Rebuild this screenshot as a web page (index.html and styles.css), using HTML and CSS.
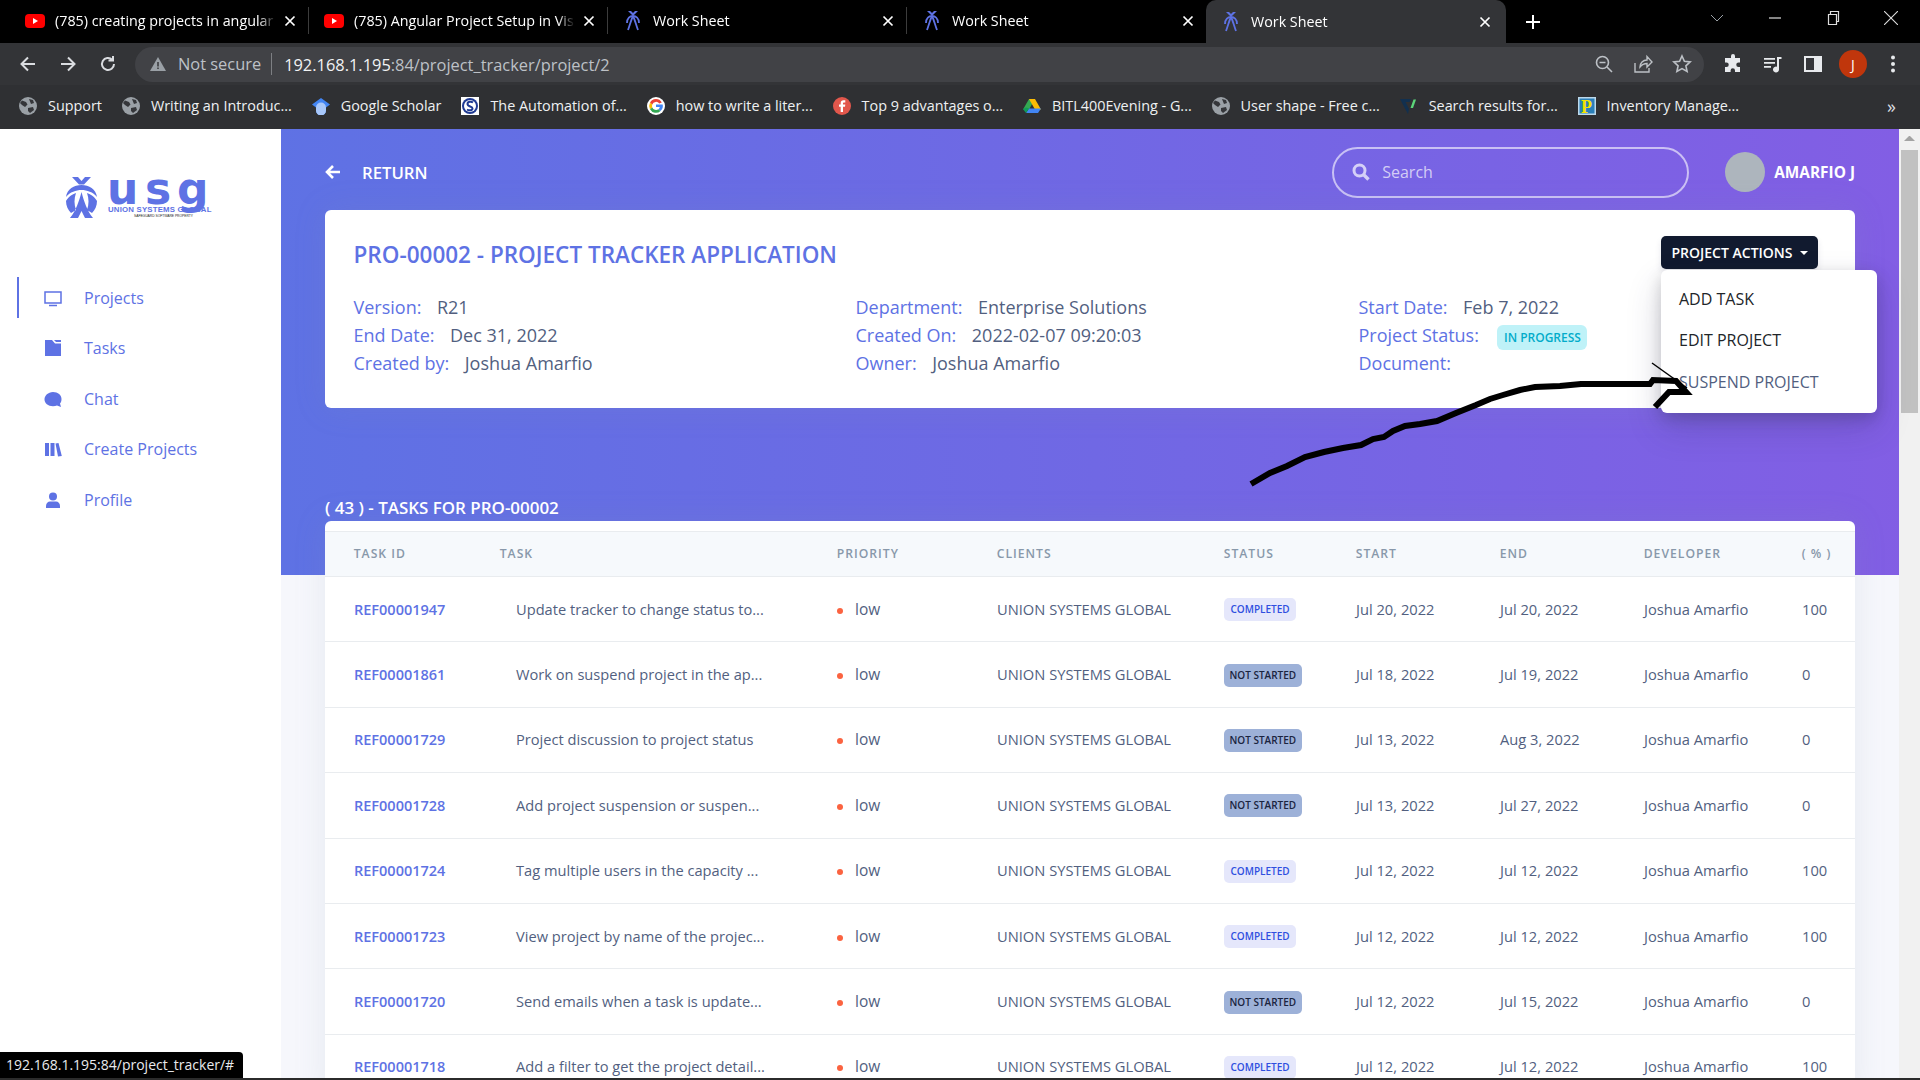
FILE: index.html
```html
<!DOCTYPE html>
<html>
  <head>
    <meta charset="utf-8">
    <title>Work Sheet</title>
    <link rel="stylesheet" href="styles.css">
  </head>
  <body>
    <svg class="defs" width="0" height="0">
      <symbol id="yt" viewBox="0 0 20 14"><rect width="20" height="14" rx="4" fill="#f00"/><path d="M8 4l5 3-5 3z" fill="#fff"/></symbol>
      <symbol id="usgfav" viewBox="0 0 16 20"><g fill="none" stroke="#5e72e4" stroke-width="1.8"><path d="M2 12c0-5 3-7 6-7s6 2 6 7"/><path d="M8 5c-2 4-3 9-5 14M8 5c2 4 3 9 5 14"/></g><path d="M3 0h3l2 2 2-2h3L9 4H7z" fill="#5e72e4"/></symbol>
      <symbol id="globe" viewBox="0 0 18 18"><circle cx="9" cy="9" r="9" fill="#9aa0a6"/><path d="M3 3.500l4 1.500 1.500 2.500L6 10 3 8 1 6zM10 2l4 1 1 3-3 1zM9 11l5-1 1 3-4 3-2-2z" fill="#35363a"/></symbol>
      <symbol id="close" viewBox="0 0 12 12"><path d="M1.500 1.500l9 9M10.500 1.500l-9 9" stroke="#fff" stroke-width="1.700"/></symbol>
    </svg>

    <div class="browser">
      <div class="tabstrip">
        <div class="tab"><svg class="fav"><use href="#yt"/></svg><span class="tab-title">(785) creating projects in angular</span><svg class="tab-x"><use href="#close"/></svg></div>
        <div class="tab"><svg class="fav"><use href="#yt"/></svg><span class="tab-title">(785) Angular Project Setup in Vis</span><svg class="tab-x"><use href="#close"/></svg></div>
        <div class="tab"><svg class="fav"><use href="#usgfav"/></svg><span class="tab-title">Work Sheet</span><svg class="tab-x"><use href="#close"/></svg></div>
        <div class="tab no-sep"><svg class="fav"><use href="#usgfav"/></svg><span class="tab-title">Work Sheet</span><svg class="tab-x"><use href="#close"/></svg></div>
        <div class="tab active"><svg class="fav"><use href="#usgfav"/></svg><span class="tab-title">Work Sheet</span><svg class="tab-x"><use href="#close"/></svg></div>
        <svg class="new-tab" viewBox="0 0 16 16"><path d="M8 1v14M1 8h14" stroke="#fff" stroke-width="2"/></svg>
        <div class="win-controls">
          <svg viewBox="0 0 14 14"><path d="M1 4l6 6 6-6" fill="none" stroke="#9aa0a6"/></svg>
          <svg viewBox="0 0 14 14"><path d="M1 7h12" stroke="#ddd" stroke-width="1.200"/></svg>
          <svg viewBox="0 0 14 14"><path d="M2.500 3.500h8v10h-8zM4.500 3.500v-3h8v10h-2" fill="none" stroke="#ddd" stroke-width="1.200"/></svg>
          <svg viewBox="0 0 14 14"><path d="M0 0l14 14M14 0L0 14" stroke="#ddd" stroke-width="1.100"/></svg>
        </div>
      </div>

      <div class="toolbar">
        <svg class="tool" viewBox="0 0 20 20"><path d="M17 10H4M10 3.500L3.500 10l6.500 6.500" fill="none" stroke="#dadce0" stroke-width="2"/></svg>
        <svg class="tool" viewBox="0 0 20 20"><path d="M3 10h13M10 3.500l6.500 6.500-6.500 6.500" fill="none" stroke="#dadce0" stroke-width="2"/></svg>
        <svg class="tool" viewBox="0 0 20 20"><path d="M16 10a6 6 0 1 1-1.800-4.300M15 2v4.500h-4.500" fill="none" stroke="#dadce0" stroke-width="2"/></svg>
        <div class="omnibox">
          <svg class="warn" viewBox="0 0 16 14"><path d="M8 0l8 14H0z" fill="#9aa0a6"/><path d="M7.200 5h1.600v4.500H7.200zM7.200 10.500h1.600V12H7.200z" fill="#3c3d40"/></svg>
          <span class="not-secure">Not secure</span>
          <span class="url"><b>192.168.1.195</b>:84/project_tracker/project/2</span>
          <div class="omni-icons">
            <svg viewBox="0 0 20 20"><circle cx="8.500" cy="8.500" r="6" fill="none" stroke="#bdc1c6" stroke-width="1.600"/><path d="M5.500 8.500h6M13 13l5 5" stroke="#bdc1c6" stroke-width="1.600"/></svg>
            <svg viewBox="0 0 20 20"><path d="M2 9v9h14v-4M7 13c0-4 3-7 7-7V2.500L19 8l-5 5V9.500c-3 0-5 1-7 3.500z" fill="none" stroke="#bdc1c6" stroke-width="1.400"/></svg>
            <svg viewBox="0 0 20 20"><path d="M10 2l2.400 5.300 5.800.6-4.300 3.900 1.200 5.700-5.100-2.900-5.100 2.900 1.200-5.700L1.800 7.900l5.800-.6z" fill="none" stroke="#bdc1c6" stroke-width="1.600"/></svg>
          </div>
        </div>
        <div class="ext-icons">
          <svg viewBox="0 0 20 20"><path d="M8 2a2 2 0 0 1 4 0v2h5v4.500h-1.500a2.200 2.200 0 0 0 0 4.500H17v5h-5v-1.500a2.200 2.200 0 0 0-4.400 0V18H2v-5h1.500a2.200 2.200 0 0 0 0-4.500H2V4h6z" fill="#e8eaed"/></svg>
          <svg viewBox="0 0 20 20"><path d="M1 4h11v1.800H1zM1 8h11v1.800H1zM1 12h7v1.800H1zM14 3h4.500v2H16v10.500a3 3 0 1 1-2-2.800z" fill="#e8eaed"/></svg>
          <svg viewBox="0 0 20 20"><path d="M1 2h18v16H1z" fill="#e8eaed"/><path d="M3 4h8v12H3z" fill="#35363a"/></svg>
          <span class="me">J</span>
          <svg viewBox="0 0 20 20"><circle cx="10" cy="3.500" r="2" fill="#e8eaed"/><circle cx="10" cy="10" r="2" fill="#e8eaed"/><circle cx="10" cy="16.500" r="2" fill="#e8eaed"/></svg>
        </div>
      </div>

      <div class="bookmarks">
        <a class="bm"><svg><use href="#globe"/></svg>Support</a>
        <a class="bm"><svg><use href="#globe"/></svg>Writing an Introduc...</a>
        <a class="bm"><svg viewBox="0 0 18 18"><path d="M9 1l9 6.500-4 3v3a5 5 0 0 1-10 0v-3l-4-3z" fill="#4285f4"/><path d="M4 10.500a5 5 0 0 1 10 0v3a5 5 0 0 1-10 0z" fill="#a8c7fa"/></svg>Google Scholar</a>
        <a class="bm"><svg viewBox="0 0 18 18"><rect width="18" height="18" fill="#fff"/><circle cx="9" cy="9" r="8" fill="#1f3a93"/><circle cx="9" cy="9" r="6" fill="#fff"/><path d="M12 5.500C10 4 6.500 4.500 6.500 7c0 3 5 2 5 4.500 0 2-3.500 2.300-5.500 1" fill="none" stroke="#1f3a93" stroke-width="2"/></svg>The Automation of...</a>
        <a class="bm"><svg viewBox="0 0 18 18"><circle cx="9" cy="9" r="9" fill="#fff"/><path d="M14.800 5.500A6.700 6.700 0 0 0 3 5.800l2.300 1.700a4 4 0 0 1 7-1z" fill="#ea4335"/><path d="M3 5.800a6.700 6.700 0 0 0 0 6.400l2.300-1.700a4 4 0 0 1 0-3z" fill="#fbbc05"/><path d="M3 12.200a6.700 6.700 0 0 0 10.500 1.700l-2.100-1.700A4 4 0 0 1 5.300 10.500z" fill="#34a853"/><path d="M13.500 13.900a6.500 6.500 0 0 0 2.200-6.400H9v2.500h3.800a3.400 3.400 0 0 1-1.400 2.200z" fill="#4285f4"/></svg>how to write a liter...</a>
        <a class="bm"><svg viewBox="0 0 18 18"><circle cx="9" cy="9" r="9" fill="#e2574c"/><path d="M10 15V9.800h2l.3-2.200H10V6.400c0-.7.300-1 1-1h1.300V3.300h-1.800C8.700 3.300 7.700 4.400 7.700 6v1.600H6v2.200h1.700V15z" fill="#fff"/></svg>Top 9 advantages o...</a>
        <a class="bm"><svg viewBox="0 0 18 18"><path d="M6 2h6l-6 10.500H0z" fill="#34a853"/><path d="M6 2h6l6 10.500h-6z" fill="#fbbc05"/><path d="M3 16l3-4.500h12l-3 4.500z" fill="#4285f4"/><path d="M0 12l3 4 3-4.500-3-1z" fill="#0f9d58"/></svg>BITL400Evening - G...</a>
        <a class="bm"><svg><use href="#globe"/></svg>User shape - Free c...</a>
        <a class="bm"><svg viewBox="0 0 18 18"><path d="M0 2h11l-1.500 3H5.500L9 12l-1 5z" fill="#12304f"/><path d="M10.500 11l3-8.500h2.500L13 11z" fill="#5cd67a"/></svg>Search results for...</a>
        <a class="bm"><svg viewBox="0 0 18 18"><rect width="18" height="18" fill="#bcd9ec"/><rect x="1.500" y="1.500" width="15" height="15" fill="#2a7fb8"/><text class="p-mark" x="3" y="16">P</text></svg>Inventory Manage...</a>
        <span class="bm-more">»</span>
      </div>

      <div class="page">
        <aside class="sidebar">
          <svg class="logo" viewBox="0 0 141 42">
            <path class="ink" d="M7 0h6l3.500 4L20 0h6l-7 7.500h-5zM1 20C2 12 9 8 16.500 8S31 12 32 20c-4-5-10-7-15.500-7S5 15 1 20zM1 24c3-5 7-7 10-8-2 6-2 11 0 17l-5 3c-3-3-5-7-5-12zM32 24c-3-5-7-7-10-8 2 6 2 11 0 17l5 3c3-3 5-7 5-12zM16.500 15c-2.500 9-5.500 19-11.500 26h8l3.500-7 3.500 7h8c-6-7-9-17-11.500-26z"/>
            <text class="usg" x="42" y="26.500">u</text>
            <text class="usg" x="80" y="26.500">s</text>
            <text class="usg" x="112" y="26.500">g</text>
            <text class="usg-name" x="43" y="35">UNION SYSTEMS GLOBAL</text>
            <text class="usg-tag" x="69" y="39.500">SAFEGUARD SOFTWARE PROPERTY</text>
          </svg>
          <nav class="nav">
            <a class="nav-item current"><svg viewBox="0 0 18 18"><path d="M1 3h16v11H1zM5 16.500h8" fill="none" stroke="currentColor" stroke-width="1.500"/></svg>Projects</a>
            <a class="nav-item"><svg viewBox="0 0 18 18"><path d="M1 1h7l3 3.500h6V17H1zM10 1h7v2h-5z" fill="currentColor"/></svg>Tasks</a>
            <a class="nav-item"><svg viewBox="0 0 18 18"><path d="M9 2c5 0 8.500 3 8.500 7 0 2-.6 3.500-1.500 4.500l1 3.500-4-1.500c-1.200.5-2.500.7-4 .7-5 0-8.500-3-8.500-6.700S4 2 9 2z" fill="currentColor"/></svg>Chat</a>
            <a class="nav-item"><svg viewBox="0 0 18 18"><path d="M1 3h4v13H1zM6.500 3h4v13h-4zM11.500 3.500l3-.5 3.300 13-3.800.5z" fill="currentColor"/></svg>Create Projects</a>
            <a class="nav-item"><svg viewBox="0 0 18 18"><circle cx="9" cy="5.500" r="4" fill="currentColor"/><path d="M2 17v-2c0-3 2-4.500 4-4.500h6c2 0 4 1.500 4 4.500v2z" fill="currentColor"/></svg>Profile</a>
          </nav>
        </aside>

        <main class="main">
          <div class="topbar">
            <a class="return"><svg viewBox="0 0 16 16"><path d="M15 8H3M8 2L2 8l6 6" fill="none" stroke="#fff" stroke-width="2.600"/></svg>RETURN</a>
            <div class="search">
              <svg viewBox="0 0 18 18"><circle cx="7.500" cy="7.500" r="5.500" fill="none" stroke="#d5d0f7" stroke-width="3"/><path d="M11.500 11.500l5 5" stroke="#d5d0f7" stroke-width="3.400"/></svg>
              <span>Search</span>
            </div>
            <div class="user"><span class="avatar"></span>AMARFIO J</div>
          </div>

          <section class="project-card">
            <div class="project-head">
              <h1>PRO-00002 - PROJECT TRACKER APPLICATION</h1>
              <button class="actions-btn">PROJECT ACTIONS<i class="caret"></i></button>
            </div>
            <div class="project-info">
              <div class="info-col">
                <p><label>Version:</label>R21</p>
                <p><label>End Date:</label>Dec 31, 2022</p>
                <p><label>Created by:</label>Joshua Amarfio</p>
              </div>
              <div class="info-col">
                <p><label>Department:</label>Enterprise Solutions</p>
                <p><label>Created On:</label>2022-02-07 09:20:03</p>
                <p><label>Owner:</label>Joshua Amarfio</p>
              </div>
              <div class="info-col">
                <p><label>Start Date:</label>Feb 7, 2022</p>
                <p><label>Project Status:</label><span class="progress-badge">IN PROGRESS</span></p>
                <p><label>Document:</label></p>
              </div>
            </div>
            <div class="dropdown">
              <a>ADD TASK</a>
              <a>EDIT PROJECT</a>
              <a class="hovered">SUSPEND PROJECT</a>
            </div>
          </section>

          <h2 class="tasks-title">( 43 ) - TASKS FOR PRO-00002</h2>

          <section class="tasks-card">
            <table class="tasks">
              <colgroup>
                <col class="c-id"><col class="c-task"><col class="c-pri"><col class="c-client"><col class="c-status"><col class="c-date"><col class="c-date"><col class="c-dev"><col class="c-pct">
              </colgroup>
              <thead>
                <tr><th>TASK ID</th><th>TASK</th><th>PRIORITY</th><th>CLIENTS</th><th>STATUS</th><th>START</th><th>END</th><th>DEVELOPER</th><th>( % )</th></tr>
              </thead>
              <tbody>
                <tr><td><a class="ref">REF00001947</a></td><td class="task">Update tracker to change status to...</td><td class="pri"><i class="dot"></i>low</td><td>UNION SYSTEMS GLOBAL</td><td><span class="st done">COMPLETED</span></td><td>Jul 20, 2022</td><td>Jul 20, 2022</td><td>Joshua Amarfio</td><td>100</td></tr>
                <tr><td><a class="ref">REF00001861</a></td><td class="task">Work on suspend project in the ap...</td><td class="pri"><i class="dot"></i>low</td><td>UNION SYSTEMS GLOBAL</td><td><span class="st todo">NOT STARTED</span></td><td>Jul 18, 2022</td><td>Jul 19, 2022</td><td>Joshua Amarfio</td><td>0</td></tr>
                <tr><td><a class="ref">REF00001729</a></td><td class="task">Project discussion to project status</td><td class="pri"><i class="dot"></i>low</td><td>UNION SYSTEMS GLOBAL</td><td><span class="st todo">NOT STARTED</span></td><td>Jul 13, 2022</td><td>Aug 3, 2022</td><td>Joshua Amarfio</td><td>0</td></tr>
                <tr><td><a class="ref">REF00001728</a></td><td class="task">Add project suspension or suspen...</td><td class="pri"><i class="dot"></i>low</td><td>UNION SYSTEMS GLOBAL</td><td><span class="st todo">NOT STARTED</span></td><td>Jul 13, 2022</td><td>Jul 27, 2022</td><td>Joshua Amarfio</td><td>0</td></tr>
                <tr><td><a class="ref">REF00001724</a></td><td class="task">Tag multiple users in the capacity ...</td><td class="pri"><i class="dot"></i>low</td><td>UNION SYSTEMS GLOBAL</td><td><span class="st done">COMPLETED</span></td><td>Jul 12, 2022</td><td>Jul 12, 2022</td><td>Joshua Amarfio</td><td>100</td></tr>
                <tr><td><a class="ref">REF00001723</a></td><td class="task">View project by name of the projec...</td><td class="pri"><i class="dot"></i>low</td><td>UNION SYSTEMS GLOBAL</td><td><span class="st done">COMPLETED</span></td><td>Jul 12, 2022</td><td>Jul 12, 2022</td><td>Joshua Amarfio</td><td>100</td></tr>
                <tr><td><a class="ref">REF00001720</a></td><td class="task">Send emails when a task is update...</td><td class="pri"><i class="dot"></i>low</td><td>UNION SYSTEMS GLOBAL</td><td><span class="st todo">NOT STARTED</span></td><td>Jul 12, 2022</td><td>Jul 15, 2022</td><td>Joshua Amarfio</td><td>0</td></tr>
                <tr><td><a class="ref">REF00001718</a></td><td class="task">Add a filter to get the project detail...</td><td class="pri"><i class="dot"></i>low</td><td>UNION SYSTEMS GLOBAL</td><td><span class="st done">COMPLETED</span></td><td>Jul 12, 2022</td><td>Jul 12, 2022</td><td>Joshua Amarfio</td><td>100</td></tr>
              </tbody>
            </table>
          </section>
        </main>

        <div class="scrollbar">
          <span class="arrow-up"></span>
          <span class="thumb"></span>
        </div>
      </div>
      <div class="taskbar-edge"></div>
    </div>

    <!-- hand drawn arrow on the screenshot -->
    <svg class="scribble" viewBox="0 0 1920 1080">
      <path class="thick" d="M1251 484L1270 473 1287 466 1305 457 1324 452 1343 448 1361 445 1373 439 1384 437 1393 431 1405 426 1420 424 1437 421 1456 413 1476 405 1490 399 1503 395 1520 390 1535 387 1560 386 1581 384 1620 384 1650 384 1653 380 1676 381 1686 392 1669 392 1655 407"/>
      <path class="thin" d="M1652 363L1687 388"/>
    </svg>

    <div class="link-status">192.168.1.195:84/project_tracker/#</div>
  </body>
</html>
```

FILE: styles.css
```css
* {
  box-sizing: border-box;
}

html, body {
  margin: 0;
  height: 100%;
  overflow: hidden;
}

body {
  font-family: "Open Sans", "Noto Sans", sans-serif;
  color: #525f7f;
  background: #fff;
}

.defs {
  display: block;
  height: 0;
}

.browser {
  height: 1080px;
  display: flex;
  flex-direction: column;
}

/* browser chrome */
.tabstrip {
  height: 43px;
  flex: none;
  background: #000;
  display: flex;
  align-items: stretch;
  padding-left: 10px;
  color: #fff;
  font-size: 14.300px;
}

.tab {
  width: 299px;
  display: flex;
  align-items: center;
  padding: 0 12px 0 15px;
  border-right: 1px solid #3c3c3c;
  margin: 7px 0 9px;
  height: 27px;
}

.tab.no-sep {
  border-right: 0;
}

.tab.active {
  margin: 0;
  height: 43px;
  width: 300px;
  padding-right: 15px;
  background: #333437;
  border-radius: 10px 10px 0 0;
  border-right: 0;
}

.fav {
  width: 20px;
  height: 20px;
  flex: none;
  margin-right: 10px;
}

.tab-title {
  flex: 1;
  overflow: hidden;
  white-space: nowrap;
  -webkit-mask-image: linear-gradient(to right, #000 92%, transparent);
  mask-image: linear-gradient(to right, #000 92%, transparent);
}

.tab-x {
  width: 12px;
  height: 12px;
  flex: none;
  margin-left: 8px;
}

.new-tab {
  width: 16px;
  height: 16px;
  margin: 14px 0 0 19px;
}

.win-controls {
  display: flex;
  align-items: center;
  gap: 44px;
  margin-left: auto;
  padding-right: 22px;
  height: 36px;
}

.win-controls svg {
  width: 14px;
  height: 14px;
}

.toolbar {
  height: 42px;
  flex: none;
  background: #333437;
  display: flex;
  align-items: center;
  padding-left: 18px;
}

.tool {
  width: 20px;
  height: 20px;
  flex: none;
  margin-right: 20px;
}

.omnibox {
  width: 1569px;
  height: 35px;
  margin-left: -3px;
  background: #414246;
  border-radius: 18px;
  display: flex;
  align-items: center;
  padding-left: 15px;
  font-size: 16.400px;
  color: #bdc1c6;
}

.warn {
  width: 16px;
  height: 14px;
  margin-right: 12px;
}

.not-secure {
  padding-right: 10px;
  border-right: 1px solid #7d7f83;
  line-height: 22px;
  margin-right: 12px;
}

.url {
  padding-top: 1px;
}

.url b {
  font-weight: 400;
  color: #f1f3f4;
}

.omni-icons {
  display: flex;
  gap: 19px;
  margin-left: auto;
  padding-right: 12px;
}

.omni-icons svg {
  width: 20px;
  height: 20px;
}

.ext-icons {
  display: flex;
  align-items: center;
  gap: 20px;
  margin-left: 19px;
}

.ext-icons svg {
  width: 20px;
  height: 20px;
}

.me {
  width: 28px;
  height: 28px;
  margin: 0 -4px;
  border-radius: 50%;
  background: #c0360c;
  color: #fff;
  font-size: 14px;
  display: flex;
  align-items: center;
  justify-content: center;
}

.bookmarks {
  height: 44px;
  flex: none;
  background: #2f3033;
  display: flex;
  align-items: center;
  padding: 0 0 3px 19px;
  gap: 19.900px;
  color: #eef0f2;
  font-size: 14.400px;
}

.bm {
  display: flex;
  align-items: center;
  gap: 11px;
  white-space: nowrap;
}

.bm svg {
  width: 18px;
  height: 18px;
  flex: none;
}

.p-mark {
  font: bold 18px "Liberation Serif", serif;
  fill: #f4e400;
}

.bm-more {
  margin-left: auto;
  padding-right: 24px;
  font-size: 18px;
  color: #dadce0;
}

/* page */
.page {
  flex: 1;
  min-height: 0;
  display: flex;
  overflow: hidden;
}

.sidebar {
  width: 281px;
  flex: none;
  background: #fff;
  padding-top: 48px;
}

.logo {
  display: block;
  width: 141px;
  height: 42px;
  margin-left: 65px;
  overflow: visible;
}

.ink {
  fill: #5e72e4;
}

.usg {
  font: bold 44px "DejaVu Sans", sans-serif;
  fill: #5e72e4;
}

.usg-name {
  font: bold 7.800px "Liberation Sans", sans-serif;
  fill: #5e72e4;
  letter-spacing: .2px;
}

.usg-tag {
  font: 3.300px "Liberation Sans", sans-serif;
  fill: #222;
}

.nav {
  margin: 58px 0 0 17px;
  display: flex;
  flex-direction: column;
  gap: 9.500px;
}

.nav-item {
  height: 41px;
  display: flex;
  align-items: center;
  padding-left: 25px;
  border-left: 2px solid transparent;
  color: #5e72e4;
  font-size: 16px;
}

.nav-item.current {
  border-left-color: #5e72e4;
}

.nav-item svg {
  width: 18px;
  height: 18px;
  margin-right: 22px;
  flex: none;
}

.main {
  flex: 1;
  min-width: 0;
  padding: 0 44px;
  background: linear-gradient(87deg, #5e72e4, #825ee4) no-repeat, #f6f7fc;
  background-size: 100% 446px, auto;
}

.topbar {
  height: 81px;
  display: flex;
  align-items: center;
  padding-top: 5px;
  color: #fff;
}

.return {
  display: flex;
  align-items: center;
  font-weight: 600;
  font-size: 16.700px;
}

.return svg {
  width: 16px;
  height: 16px;
  margin-right: 21px;
}

.search {
  width: 357px;
  height: 51px;
  margin-left: auto;
  border: 2px solid rgba(255, 255, 255, .6);
  border-radius: 26px;
  display: flex;
  align-items: center;
  padding-left: 18px;
  color: #d3cdf5;
  font-size: 16px;
}

.search svg {
  width: 18px;
  height: 18px;
  margin-right: 12px;
}

.user {
  display: flex;
  align-items: center;
  margin-left: 36px;
  font-weight: 700;
  font-size: 15.400px;
}

.avatar {
  width: 40px;
  height: 40px;
  border-radius: 50%;
  background: #adb5bd;
  margin-right: 9px;
}

.project-card {
  position: relative;
  height: 198px;
  background: #fff;
  border-radius: 6px;
  padding: 26px 37px 0 28.500px;
  box-shadow: 0 0 32px rgba(136, 152, 170, .15);
}

.project-head {
  display: flex;
  align-items: flex-start;
  justify-content: space-between;
  height: 57px;
}

.project-head h1 {
  margin: 0;
  font-size: 22.500px;
  line-height: 38px;
  font-weight: 600;
  color: #5e72e4;
}

.actions-btn {
  width: 157px;
  height: 33px;
  border: 0;
  border-radius: 5px;
  background: #111a2f;
  color: #fff;
  font: 600 14px "Open Sans", sans-serif;
  box-shadow: 0 4px 6px rgba(50, 50, 93, .11);
}

.caret {
  display: inline-block;
  margin-left: 7px;
  vertical-align: 3px;
  border: 4px solid transparent;
  border-top-color: #fff;
  border-bottom: 0;
}

.project-info {
  display: grid;
  grid-template-columns: 502px 503px 1fr;
}

.info-col p {
  margin: 0;
  height: 28px;
  display: flex;
  align-items: center;
  font-size: 18px;
  white-space: nowrap;
}

.info-col label {
  color: #5e72e4;
  margin-right: 15.500px;
}

.progress-badge {
  width: 90px;
  height: 25px;
  margin: 4px 0 0 3px;
  border-radius: 6px;
  background: #bff2f8;
  color: #03acca;
  font-size: 12px;
  font-weight: 600;
  display: flex;
  align-items: center;
  justify-content: center;
}

.dropdown {
  position: absolute;
  left: 1336px;
  top: 60px;
  width: 216px;
  height: 143px;
  background: #fff;
  border-radius: 6px;
  box-shadow: 0 15px 35px rgba(50, 50, 93, .2), 0 5px 15px rgba(0, 0, 0, .17);
  padding: 8px 18px;
  display: flex;
  flex-direction: column;
  font-size: 16px;
  color: #212529;
}

.dropdown a {
  height: 41.500px;
  display: flex;
  align-items: center;
}

.dropdown .hovered {
  color: #525f7f;
}

.tasks-title {
  margin: 88px 0 0;
  height: 25px;
  line-height: 23px;
  font-size: 16.950px;
  font-weight: 600;
  color: #fff;
}

.tasks-card {
  background: #fff;
  border-radius: 6px 6px 0 0;
  padding-top: 10px;
  box-shadow: 0 0 32px rgba(136, 152, 170, .15);
}

.tasks {
  width: 100%;
  border-collapse: collapse;
  table-layout: fixed;
}

.c-id { width: 146px; }
.c-task { width: 337px; }
.c-pri { width: 160px; }
.c-client { width: 227px; }
.c-status { width: 132px; }
.c-date { width: 144px; }
.c-dev { width: 158px; }
.c-pct { width: 82px; }

.tasks th {
  height: 45px;
  padding: 0 0 2px 28.700px;
  text-align: left;
  background: #f6f9fc;
  border-top: 1px solid #e9ecef;
  border-bottom: 1px solid #e9ecef;
  color: #8898aa;
  font-size: 12.200px;
  font-weight: 600;
  letter-spacing: 1px;
}

.tasks td {
  height: 65.400px;
  padding: 0 0 1px 29px;
  border-bottom: 1px solid #e9ecef;
  font-size: 14.700px;
  white-space: nowrap;
}

.ref {
  color: #5e72e4;
  font-weight: 600;
  font-size: 14.500px;
}

.tasks .task {
  padding-left: 45px;
  font-size: 14.650px;
}

.tasks .pri {
  font-size: 15.500px;
}

.dot {
  display: inline-block;
  width: 6px;
  height: 6px;
  margin-right: 12px;
  border-radius: 50%;
  background: #fb6340;
  vertical-align: 1px;
}

.st {
  display: inline-block;
  height: 23px;
  line-height: 23px;
  margin-top: 2px;
  padding: 0 6.500px;
  border-radius: 5px;
  font-size: 10px;
  font-weight: 600;
}

.st.done {
  background: #e5e7fb;
  color: #2f4fe0;
}

.st.todo {
  padding: 0 5.500px;
  background: #9db1d8;
  color: #1a2440;
}

.scrollbar {
  width: 21px;
  flex: none;
  background: #f1f1f1;
}

.arrow-up {
  display: block;
  height: 21px;
  padding: 7px 5px;
}

.arrow-up::before {
  content: "";
  display: block;
  border: 5px solid transparent;
  border-bottom-color: #a3a3a3;
  border-top: 0;
}

.thumb {
  display: block;
  height: 263px;
  margin: 0 2px;
  background: #c1c1c1;
}

.taskbar-edge {
  height: 2px;
  flex: none;
  background: #2b2b2b;
}

/* over the page */
.scribble {
  position: absolute;
  left: 0;
  top: 0;
  width: 1920px;
  height: 1080px;
  pointer-events: none;
}

.thick, .thin {
  fill: none;
  stroke: #000;
}

.thick {
  stroke-width: 6px;
}

.thin {
  stroke-width: 1.500px;
}

.link-status {
  position: absolute;
  left: 0;
  top: 1052px;
  width: 243px;
  height: 26px;
  padding-left: 6px;
  background: #000;
  border-radius: 0 4px 0 0;
  color: #e8eaed;
  font-size: 14px;
  line-height: 26px;
  white-space: nowrap;
}
```
